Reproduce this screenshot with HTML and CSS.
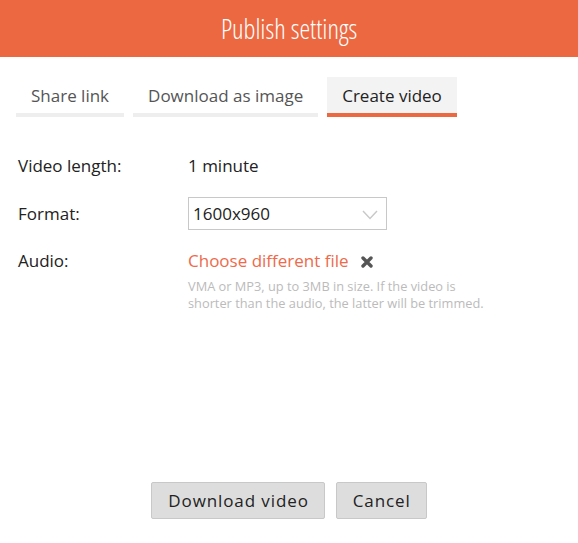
FILE: index.html
```html
<!DOCTYPE html>
<html>
<head>
<meta charset="utf-8">
<link rel="stylesheet" href="styles.css">
</head>
<body>
<div class="dialog">
  <div class="header"><h1 class="title">Publish settings</h1></div>
  <div class="tabs">
    <div class="tab">Share link</div>
    <div class="tab">Download as image</div>
    <div class="tab active">Create video</div>
  </div>
  <div class="form">
    <div class="row">
      <div class="label">Video length:</div>
      <div class="value">1 minute</div>
    </div>
    <div class="row center">
      <div class="label">Format:</div>
      <div class="select">
        <span>1600x960</span>
        <svg class="chev" width="16" height="10" viewBox="0 0 16 10"><polyline points="1,1 8,8.5 15,1" fill="none" stroke="#c8c8c8" stroke-width="1.4"/></svg>
      </div>
    </div>
    <div class="row">
      <div class="label">Audio:</div>
      <div class="value">
        <div class="file"><span class="link">Choose different file</span>
          <svg class="remove" width="12" height="12" viewBox="0 0 12 12"><path d="M2 2 L10 10 M10 2 L2 10" stroke="#555" stroke-width="3.4" stroke-linecap="round"/></svg>
        </div>
        <div class="help">VMA or MP3, up to 3MB in size. If the video is shorter than the audio, the latter will be trimmed.</div>
      </div>
    </div>
  </div>
  <div class="footer">
    <button class="btn">Download video</button>
    <button class="btn">Cancel</button>
  </div>
</div>
</body>
</html>
```
FILE: styles.css
```css
html, body { margin: 0; padding: 0; background: #fff; }
body { font-family: "Open Sans", "Liberation Sans", sans-serif; color: #222; }
.dialog { width: 578px; height: 543px; display: flex; flex-direction: column; }
.header { height: 57px; background: #eb6841; display: flex; align-items: center; justify-content: center; }
.title { margin: 0; font-weight: 300; font-size: 27px; font-stretch: condensed; color: #fff; }
.tabs { display: flex; gap: 9px; margin-top: 20px; padding-left: 16px; }
.tab { height: 36px; line-height: 38px; padding: 0 15px; font-size: 17px; color: #555; border-bottom: 4px solid #eeeeee; }
.tab.active { background: #f3f3f3; color: #222; border-bottom-color: #eb6841; }
.form { margin-top: 37px; padding-left: 18px; display: flex; flex-direction: column; gap: 19px; }
.row { display: flex; align-items: flex-start; }
.row.center { align-items: center; }
.label { width: 170px; font-size: 17px; line-height: 24px; }
.value { font-size: 17px; line-height: 24px; }
.select { width: 199px; height: 33px; box-sizing: border-box; border: 1px solid #c8c8c8; display: flex; align-items: center; justify-content: space-between; padding: 0 4px 0 4px; font-size: 17px; }
.chev { margin-right: 4px; margin-top: 2px; }
.file { display: flex; align-items: center; gap: 12px; }
.link { color: #ee6a4a; font-size: 17px; }
.remove { margin-top: 1px; }
.help { font-size: 12.8px; line-height: 17px; color: #bbbbbb; width: 300px; margin-top: 5px; }
.footer { margin-top: auto; padding-bottom: 24px; display: flex; justify-content: center; gap: 11px; }
.btn { font-family: "Open Sans", "Liberation Sans", sans-serif; font-size: 17px; letter-spacing: 0.9px; color: #222; background: #dddddd; border: 1px solid #c8c8c8; border-radius: 2px; height: 37px; padding: 0 15px 0 16px; }
```
